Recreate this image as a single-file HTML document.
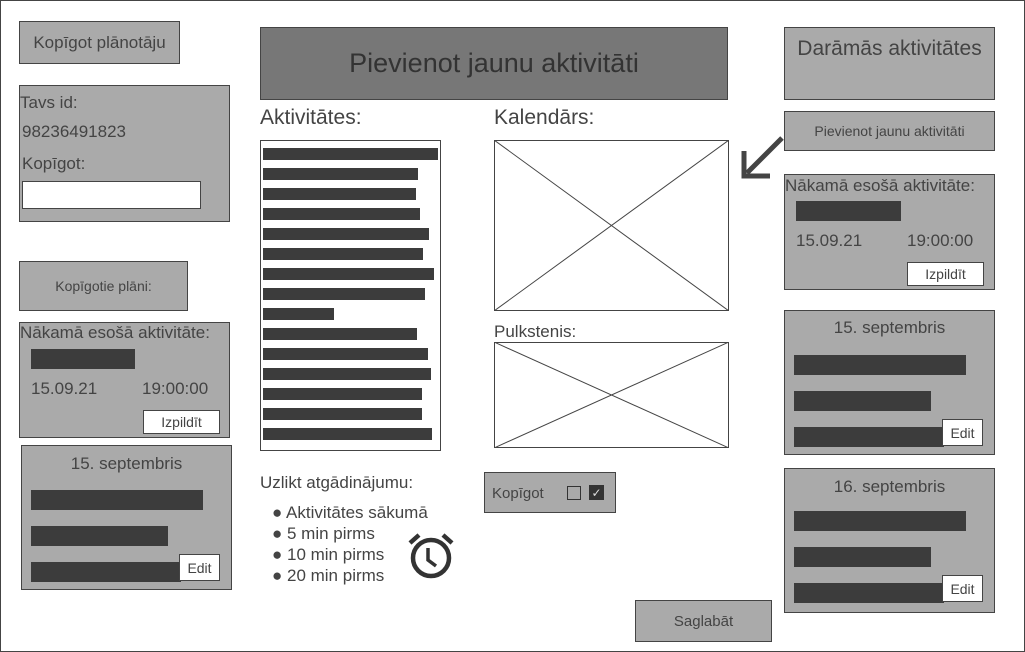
<!DOCTYPE html><html><head><meta charset="utf-8"><style>
*{box-sizing:border-box;margin:0;padding:0}
body{width:1025px;height:652px;position:relative;background:#fff;font-family:"Liberation Sans",sans-serif;color:#444;overflow:hidden}
.a{position:absolute}
.g{position:absolute;background:#aaa;border:1px solid #444}
.c{display:flex;align-items:center;justify-content:center}
.bar{position:absolute;background:#3c3c3c;height:12px}
.w{position:absolute;background:#fff;border:1px solid #444}
</style></head><body>
<div class="a" style="left:0;top:0;width:1025px;height:652px;border:1px solid #444"></div>

<div class="g c" style="left:19px;top:21px;width:161px;height:43px;font-size:17px">Kopīgot plānotāju</div>
<div class="g" style="left:19px;top:85px;width:211px;height:137px;font-size:17px">
<div class="a" style="left:0px;top:7px">Tavs id:</div>
<div class="a" style="left:2px;top:36px">98236491823</div>
<div class="a" style="left:2px;top:68px">Kopīgot:</div>
<div class="w" style="left:2px;top:95px;width:179px;height:28px"></div></div>
<div class="g c" style="left:19px;top:261px;width:169px;height:50px;font-size:14px">Kopīgotie plāni:</div>
<div class="g" style="left:19px;top:322px;width:211px;height:116px;font-size:17px">
<div class="a" style="left:0;top:0px">Nākamā esošā aktivitāte:</div>
<div class="bar" style="left:11px;top:26px;width:104px;height:20px"></div>
<div class="a" style="left:11px;top:56px">15.09.21</div><div class="a" style="left:122px;top:56px">19:00:00</div>
<div class="w c" style="left:123px;top:87px;width:77px;height:24px;font-size:14px">Izpildīt</div></div>
<div class="g" style="left:21px;top:445px;width:211px;height:145px;font-size:17px">
<div class="a" style="left:0;width:100%;text-align:center;top:8px">15. septembris</div>
<div class="bar" style="left:9px;top:44px;width:172px;height:20px"></div>
<div class="bar" style="left:9px;top:80px;width:137px;height:20px"></div>
<div class="bar" style="left:9px;top:116px;width:150px;height:20px"></div>
<div class="w c" style="left:157px;top:108px;width:41px;height:27px;font-size:14px">Edit</div></div>

<div class="a c" style="left:260px;top:27px;width:468px;height:73px;background:#777;border:1px solid #444;font-size:27px;color:#333">Pievienot jaunu aktivitāti</div>
<div class="a" style="left:260px;top:106px;font-size:21px">Aktivitātes:</div>
<div class="w" style="left:260px;top:140px;width:181px;height:311px"></div>
<div class="bar" style="left:263px;top:148px;width:175px"></div>
<div class="bar" style="left:263px;top:168px;width:155px"></div>
<div class="bar" style="left:263px;top:188px;width:153px"></div>
<div class="bar" style="left:263px;top:208px;width:157px"></div>
<div class="bar" style="left:263px;top:228px;width:166px"></div>
<div class="bar" style="left:263px;top:248px;width:160px"></div>
<div class="bar" style="left:263px;top:268px;width:171px"></div>
<div class="bar" style="left:263px;top:288px;width:162px"></div>
<div class="bar" style="left:263px;top:308px;width:71px"></div>
<div class="bar" style="left:263px;top:328px;width:154px"></div>
<div class="bar" style="left:263px;top:348px;width:165px"></div>
<div class="bar" style="left:263px;top:368px;width:168px"></div>
<div class="bar" style="left:263px;top:388px;width:159px"></div>
<div class="bar" style="left:263px;top:408px;width:159px"></div>
<div class="bar" style="left:263px;top:428px;width:169px"></div>

<div class="a" style="left:494px;top:106px;font-size:21px">Kalendārs:</div>
<svg class="a" style="left:494px;top:140px" width="235" height="171"><rect x=".5" y=".5" width="234" height="170" fill="#fff" stroke="#444"/><path d="M0 0L235 171M235 0L0 171" stroke="#444"/></svg>
<div class="a" style="left:494px;top:322px;font-size:17px">Pulkstenis:</div>
<svg class="a" style="left:494px;top:342px" width="235" height="106"><rect x=".5" y=".5" width="234" height="105" fill="#fff" stroke="#444"/><path d="M0 0L235 106M235 0L0 106" stroke="#444"/></svg>

<div class="a" style="left:260px;top:473px;font-size:17px">Uzlikt atgādinājumu:</div>
<div class="a" style="left:272px;top:502px;font-size:17px;line-height:21px">● Aktivitātes sākumā<br>● 5 min pirms<br>● 10 min pirms<br>● 20 min pirms</div>
<svg class="a" style="left:406px;top:530px" width="50" height="50" viewBox="0 0 50 50"><circle cx="25" cy="28" r="18" fill="none" stroke="#333" stroke-width="4.5"/><path d="M22 18V30L30 36" fill="none" stroke="#333" stroke-width="3.5"/><path d="M4 13L13 5M46 13L37 5" stroke="#333" stroke-width="4.5"/></svg>

<div class="g" style="left:484px;top:472px;width:132px;height:41px;font-size:15px"><div class="a" style="left:7px;top:12px">Kopīgot</div>
<div class="a" style="left:82px;top:13px;width:14px;height:14px;border:1.5px solid #333"></div>
<div class="a c" style="left:104px;top:12px;width:15px;height:15px;background:#333;color:#ddd;font-size:12px">✓</div></div>

<div class="g c" style="left:635px;top:600px;width:137px;height:42px;font-size:15px">Saglabāt</div>

<div class="g" style="left:784px;top:27px;width:211px;height:73px;font-size:21px;text-align:center;padding-top:9px">Darāmās aktivitātes</div>
<div class="g c" style="left:784px;top:111px;width:211px;height:40px;font-size:14px">Pievienot jaunu aktivitāti</div>
<svg class="a" style="left:738px;top:135px" width="50" height="48"><path d="M44 3L9 38" stroke="#444" stroke-width="5"/><path d="M6 16V41H32" fill="none" stroke="#444" stroke-width="5"/></svg>
<div class="g" style="left:784px;top:174px;width:211px;height:116px;font-size:17px">
<div class="a" style="left:0;top:1px">Nākamā esošā aktivitāte:</div>
<div class="bar" style="left:11px;top:26px;width:105px;height:20px"></div>
<div class="a" style="left:11px;top:56px">15.09.21</div><div class="a" style="left:122px;top:56px">19:00:00</div>
<div class="w c" style="left:122px;top:87px;width:77px;height:24px;font-size:14px">Izpildīt</div></div>
<div class="g" style="left:784px;top:310px;width:211px;height:145px;font-size:17px">
<div class="a" style="left:0;width:100%;text-align:center;top:7px">15. septembris</div>
<div class="bar" style="left:9px;top:44px;width:172px;height:20px"></div>
<div class="bar" style="left:9px;top:80px;width:137px;height:20px"></div>
<div class="bar" style="left:9px;top:116px;width:150px;height:20px"></div>
<div class="w c" style="left:157px;top:108px;width:41px;height:27px;font-size:14px">Edit</div></div>
<div class="g" style="left:784px;top:468px;width:211px;height:145px;font-size:17px">
<div class="a" style="left:0;width:100%;text-align:center;top:8px">16. septembris</div>
<div class="bar" style="left:9px;top:42px;width:172px;height:20px"></div>
<div class="bar" style="left:9px;top:78px;width:137px;height:20px"></div>
<div class="bar" style="left:9px;top:114px;width:150px;height:20px"></div>
<div class="w c" style="left:157px;top:106px;width:41px;height:27px;font-size:14px">Edit</div></div>
</body></html>
